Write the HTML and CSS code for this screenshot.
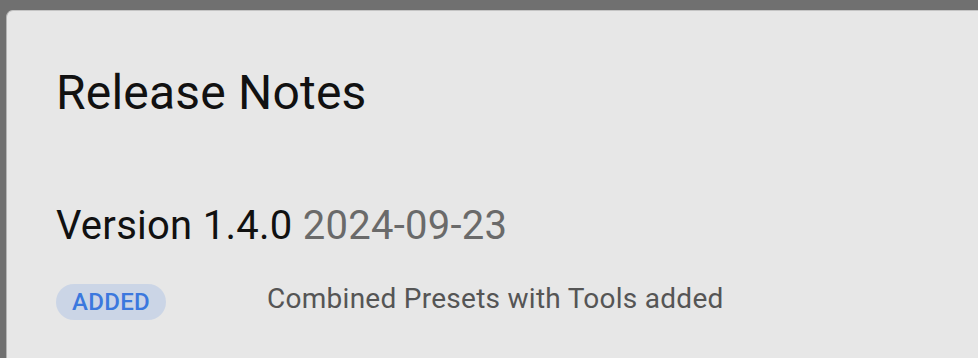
FILE: index.html
```html
<!DOCTYPE html>
<html lang="en">
<head>
<meta charset="utf-8">
<title>Release Notes</title>
<link rel="stylesheet" href="styles.css">
</head>
<body>
<div class="dialog">
  <h1 class="title">Release Notes</h1>
  <section class="release">
    <h2 class="version">Version 1.4.0 <span class="date">2024-09-23</span></h2>
    <div class="change">
      <span class="badge badge-added">ADDED</span>
      <span class="desc">Combined Presets with Tools added</span>
    </div>
  </section>
</div>
</body>
</html>
```
FILE: styles.css
```css
html, body {
  margin: 0;
  padding: 0;
  height: 100%;
}
body {
  background: #707070;
  font-family: Roboto, "Noto Sans", sans-serif;
  overflow: hidden;
}
.dialog {
  margin: 10px 0 0 6px;
  height: calc(100vh - 10px);
  background: #e7e7e7;
  border-top: 1px solid #c4c4c4;
  border-left: 1px solid #b4b4b4;
  border-top-left-radius: 7px;
  padding: 58px 0 0 49px;
  box-sizing: border-box;
}
.title {
  margin: 0;
  font-size: 48px;
  line-height: 48px;
  font-weight: 400;
  letter-spacing: 0.2px;
  color: #111;
}
.release {
  margin-top: 89px;
}
.version {
  margin: 0;
  font-size: 40px;
  line-height: 40px;
  font-weight: 400;
  letter-spacing: 0.26px;
  color: #111;
}
.date {
  color: #6a6a6a;
}
.change {
  margin-top: 35px;
  display: grid;
  grid-template-columns: 211px 1fr;
  align-items: start;
}
.badge {
  justify-self: start;
  margin-top: 3px;
  height: 36px;
  line-height: 36px;
  padding: 0 16px 0 16px;
  border-radius: 18px;
  font-size: 24px;
  font-weight: 500;
  letter-spacing: 0.3px;
}
.badge-added {
  background: #cbd5e6;
  color: #3b78de;
}
.desc {
  font-size: 28px;
  line-height: 36px;
  letter-spacing: 0.27px;
  color: #555;
}
```
